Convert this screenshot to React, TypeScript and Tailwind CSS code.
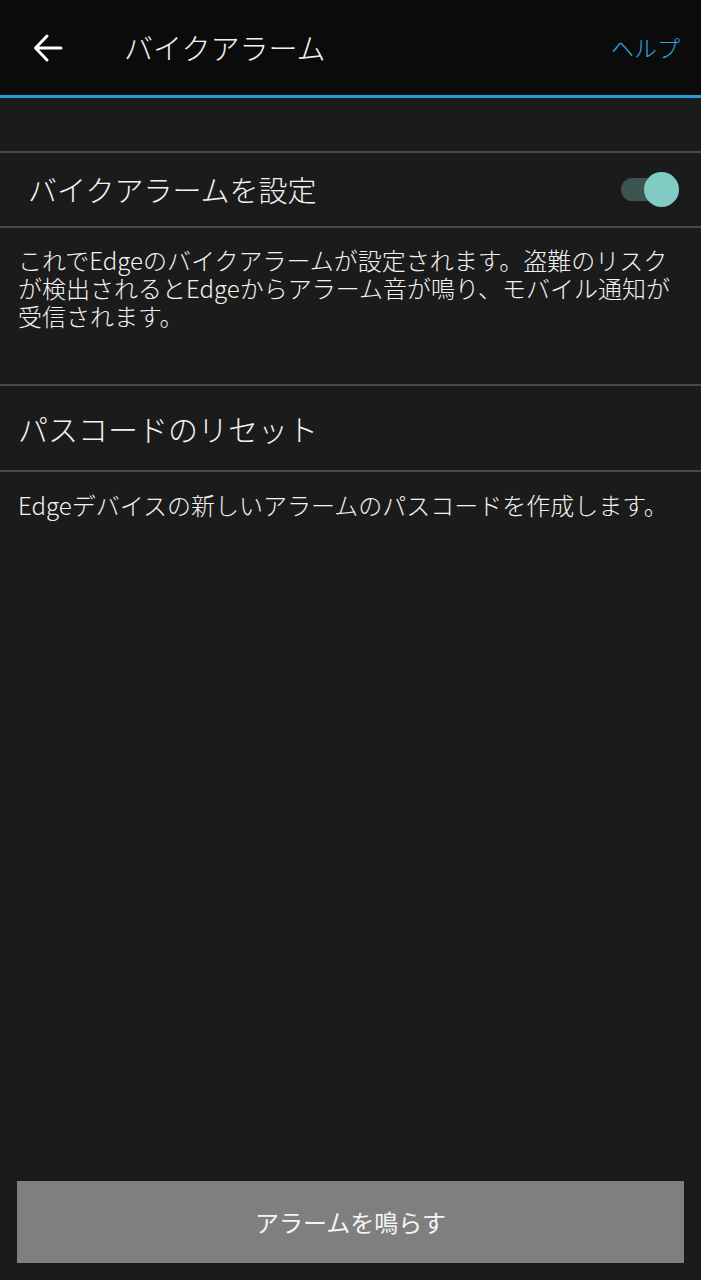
import React, { useState } from "react"

const jp = { fontFamily: '"Noto Sans CJK JP", "Noto Sans", sans-serif' }

function Divider() {
  return <div className="h-[2px] w-full bg-[#4a4a4a]" />
}

export default function App() {
  const [on, setOn] = useState(true)

  return (
    <div style={jp} className="flex h-[1280px] w-full flex-col bg-[#1b1b1b] font-light text-[#f2f2f2]">
      {/* header */}
      <div className="flex h-[95px] items-center bg-[#0b0b0b] pl-[33px] pr-[21px]">
        <svg width="30" height="30" viewBox="0 0 30 30" fill="none" stroke="white" strokeWidth="3" strokeLinecap="round" strokeLinejoin="round">
          <path d="M28 15H3M14 3L2.5 15L14 27" />
        </svg>
        <div className="ml-[61px] text-[29px] leading-none">バイクアラーム</div>
        <div className="ml-auto text-[23px] leading-none text-[#2ea3e0]">ヘルプ</div>
      </div>
      <div className="h-[3px] w-full bg-[#1f9ddb]" />

      <div className="h-[53px]" />
      <Divider />

      <div className="flex h-[73px] items-center pl-[28px] pr-[22px]">
        <div className="text-[29px] leading-none">バイクアラームを設定</div>
        <button onClick={() => setOn(!on)} className="relative ml-auto h-[36px] w-[58px]">
          <span className="absolute left-0 top-[6px] h-[23px] w-[40px] rounded-full bg-[#3e5451]" />
          <span className="absolute right-0 top-0 h-[35px] w-[35px] rounded-full bg-[#80cbc4]" />
        </button>
      </div>
      <Divider />

      <div className="h-[156px] pl-[18px] pr-[18px] pt-[18px] text-[24px] leading-[28px]">
        これでEdgeのバイクアラームが設定されます。盗難のリスクが検出されるとEdgeからアラーム音が鳴り、モバイル通知が受信されます。
      </div>
      <Divider />

      <div className="flex h-[84px] items-center pl-[18px]">
        <div className="text-[30px] leading-none">パスコードのリセット</div>
      </div>
      <Divider />

      <div className="pl-[18px] pr-[18px] pt-[19px] text-[24px] leading-[28px]">
        Edgeデバイスの新しいアラームのパスコードを作成します。
      </div>

      <div className="flex-1" />

      <div className="px-[17px] pb-[17px]">
        <button className="flex h-[82px] w-full items-center justify-center bg-[#7f7f7f] text-[24px] font-normal text-[#f5f5f5]">
          アラームを鳴らす
        </button>
      </div>
    </div>
  )
}
